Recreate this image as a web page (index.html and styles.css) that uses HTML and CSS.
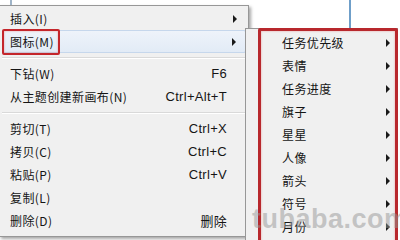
FILE: index.html
```html
<!DOCTYPE html>
<html>
<head>
<meta charset="utf-8">
<link rel="stylesheet" href="styles.css">
</head>
<body>
<div class="stage">
  <div class="bg-line bg-line-left"></div>
  <div class="bg-line bg-line-right"></div>
  <div class="menu">
    <div class="item"><span class="label">插入(I)</span><span class="arrow"></span></div>
    <div class="item active"><span class="label">图标(M)</span><span class="arrow"></span></div>
    <div class="sep"></div>
    <div class="item"><span class="label">下钻(W)</span><span class="key">F6</span><span class="noarrow"></span></div>
    <div class="item"><span class="label">从主题创建新画布(N)</span><span class="key">Ctrl+Alt+T</span><span class="noarrow"></span></div>
    <div class="sep"></div>
    <div class="item"><span class="label">剪切(T)</span><span class="key">Ctrl+X</span><span class="noarrow"></span></div>
    <div class="item"><span class="label">拷贝(C)</span><span class="key">Ctrl+C</span><span class="noarrow"></span></div>
    <div class="item"><span class="label">粘贴(P)</span><span class="key">Ctrl+V</span><span class="noarrow"></span></div>
    <div class="item"><span class="label">复制(L)</span><span class="noarrow"></span></div>
    <div class="item"><span class="label">删除(D)</span><span class="key">删除</span><span class="noarrow"></span></div>
  </div>
  <div class="mark mark-main"></div>
  <div class="submenu">
    <div class="sitem"><span class="label">任务优先级</span><span class="arrow"></span></div>
    <div class="sitem"><span class="label">表情</span><span class="arrow"></span></div>
    <div class="sitem"><span class="label">任务进度</span><span class="arrow"></span></div>
    <div class="sitem"><span class="label">旗子</span><span class="arrow"></span></div>
    <div class="sitem"><span class="label">星星</span><span class="arrow"></span></div>
    <div class="sitem"><span class="label">人像</span><span class="arrow"></span></div>
    <div class="sitem"><span class="label">箭头</span><span class="arrow"></span></div>
    <div class="sitem"><span class="label">符号</span><span class="arrow"></span></div>
    <div class="sitem"><span class="label">月份</span><span class="arrow"></span></div>
  </div>
  <div class="mark mark-sub"></div>
  <div class="watermark">tubaba.com</div>
</div>
</body>
</html>
```

FILE: styles.css
```css
html, body {
  margin: 0;
  padding: 0;
  background: #ffffff;
}

.stage {
  position: relative;
  width: 400px;
  height: 240px;
  overflow: hidden;
  font-family: "Noto Sans CJK SC", "Liberation Sans", sans-serif;
  font-size: 12px;
  color: #151515;
}

.bg-line {
  position: absolute;
  top: 0;
  width: 2px;
  background: #6f9fc9;
}
.bg-line-left { left: 10px; height: 5px; background: #9fb4c8; }
.bg-line-right { left: 349px; height: 28px; }

.menu {
  margin-top: 5px;
  margin-left: -1px;
  width: 250px;
  height: 232px;
  box-sizing: border-box;
  background: #f0f0f0;
  border: 1px solid #979797;
  padding: 1px 2px;
  box-shadow: 2px 2px 3px rgba(0, 0, 0, 0.35);
}

.item {
  display: flex;
  align-items: center;
  height: 23px;
  box-sizing: border-box;
  padding-left: 8px;
  letter-spacing: 0.4px;
}

.item.active {
  background: linear-gradient(#eef3fa, #e2ebf6);
  border: 1px solid #c6d7ec;
  border-radius: 2px;
  padding-left: 7px;
}

.label {
  flex: 1;
  white-space: nowrap;
}

.key {
  font-family: "Liberation Sans", "Noto Sans CJK SC", sans-serif;
  font-size: 13px;
  letter-spacing: 0.3px;
  white-space: nowrap;
}

.arrow, .noarrow {
  width: 19px;
  height: 8px;
  flex: none;
  position: relative;
}

.arrow::before {
  content: "";
  position: absolute;
  left: 6px;
  top: 0;
  border-left: 4px solid #1a1a1a;
  border-top: 4px solid transparent;
  border-bottom: 4px solid transparent;
}

.sep {
  height: 9px;
  box-sizing: border-box;
  border-top: 4px solid transparent;
  background: linear-gradient(#d9d9d9 0 1px, #ffffff 1px 2px, transparent 2px);
  background-clip: padding-box;
}

.mark {
  position: absolute;
  border: 2px solid #c4262c;
  border-radius: 2px;
  box-shadow: inset 0 0 2px rgba(230, 90, 90, 0.6);
}
.mark-main {
  left: 2px;
  top: 29px;
  width: 54px;
  height: 22px;
}
.mark-sub {
  left: 258px;
  top: 28px;
  width: 134px;
  height: 220px;
  border-width: 3px;
  border-color: #b8282d;
}

.submenu {
  position: absolute;
  left: 245px;
  top: 28px;
  width: 153px;
  height: 230px;
  box-sizing: border-box;
  background: #f0f0f0;
  border: 1px solid #979797;
  padding: 2px 0;
}

.sitem {
  display: flex;
  align-items: center;
  height: 23px;
  padding-left: 36px;
  letter-spacing: 0.4px;
}
.sitem .label { flex: 1; }
.sitem .arrow { width: 11px; }
.sitem .arrow::before { left: 0; }

.watermark {
  position: absolute;
  left: 252px;
  top: 204px;
  font-family: "Liberation Sans", sans-serif;
  font-weight: bold;
  font-size: 27px;
  letter-spacing: 0.5px;
  color: rgba(150, 150, 150, 0.5);
  white-space: nowrap;
}
```
